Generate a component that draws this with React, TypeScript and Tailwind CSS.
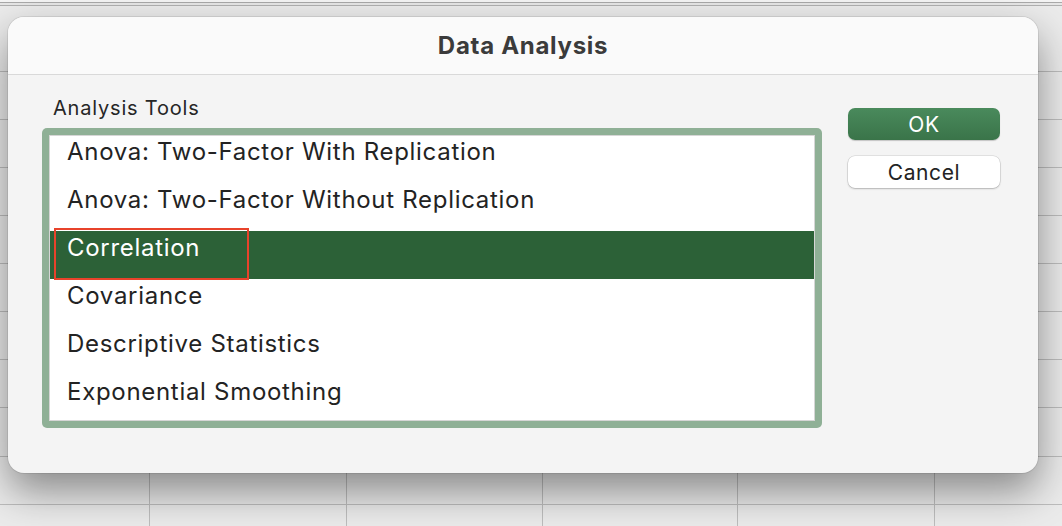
import React from "react";

const tools = [
  "Anova: Two-Factor With Replication",
  "Anova: Two-Factor Without Replication",
  "Correlation",
  "Covariance",
  "Descriptive Statistics",
  "Exponential Smoothing",
];

const colWidths = ["w-[150px]", "w-[197px]", "w-[196px]", "w-[195px]", "w-[197px]", "flex-1"];

function SheetRow({ h, noCols }: { h: string; noCols?: boolean }) {
  return (
    <div className={`flex ${h} border-b border-[#bdbdbd]`}>
      {colWidths.map((w, i) => (
        <div key={i} className={`${w} ${i < 5 && !noCols ? "border-r border-[#bdbdbd]" : ""}`} />
      ))}
    </div>
  );
}

export default function App() {
  const rowHeights = ["h-[48px]", "h-[48px]", "h-[48px]", "h-[48px]", "h-[48px]", "h-[48px]", "h-[48px]", "h-[49px]", "h-[48px]", "h-[48px]"];

  return (
    <div
      className="relative w-[1062px] h-[526px] overflow-hidden bg-[#ebebeb]"
      style={{ fontFamily: "Inter, 'Noto Sans', sans-serif" }}
    >
      {/* spreadsheet behind */}
      <div className="flex flex-col">
        <div className="h-[2px] bg-[#f4f4f4]" />
        <div className="h-[1px] bg-[#a9a9a9]" />
        <div className="h-[2px] bg-[#e6e6e6]" />
        <div className="h-[1px] bg-[#b0b0b0]" />
        <SheetRow h="h-[66px]" noCols />
        {rowHeights.map((h, i) => (
          <SheetRow key={i} h={h} />
        ))}
      </div>

      {/* dialog */}
      <div className="absolute left-[8px] top-[17px] w-[1030px] h-[456px] rounded-[16px] bg-[#f4f4f4] shadow-[0_18px_40px_rgba(0,0,0,0.42),0_0_0_1px_rgba(0,0,0,0.08)] overflow-hidden">
        <div className="h-[58px] flex items-center justify-center bg-[#fafafa] border-b border-[#d9d9d9]">
          <span className="text-[24px] font-bold text-[#3b3b3b] tracking-[0.7px]">Data Analysis</span>
        </div>

        <div className="flex">
          <div className="pl-[34px]">
            <div className="pl-[11px] pt-[20px] h-[53px] text-[20px] leading-[26px] tracking-[0.8px] text-[#262626]">Analysis Tools</div>
            <div className="w-[780px] h-[300px] rounded-[5px] bg-[#8fb096] p-[7px]">
              <div className="relative h-full bg-white border border-[#d6d6d6] overflow-hidden">
                <div className="flex flex-col -mt-[1px]">
                  {tools.map((t) => {
                    const sel = t === "Correlation";
                    return (
                      <div
                        key={t}
                        className={`h-[48px] pl-[17px] text-[24px] leading-[34px] tracking-[0.7px] ${
                          sel ? "bg-[#2c6137] text-white" : "text-[#232323]"
                        }`}
                      >
                        {t}
                      </div>
                    );
                  })}
                </div>
                <div className="absolute left-[4px] top-[92px] w-[195px] h-[52px] border-2 border-[#e8432b]" />
              </div>
            </div>
          </div>

          <div className="ml-[26px] pt-[33px] flex flex-col gap-[16px]">
            <button className="w-[152px] h-[32px] rounded-[7px] bg-[linear-gradient(#4a8a5c,#3a7449)] text-white text-[21px] leading-none tracking-[0.6px] shadow-[0_1px_1px_rgba(0,0,0,0.2)]">
              OK
            </button>
            <button className="w-[152px] h-[32px] rounded-[7px] bg-white text-[#232323] text-[21px] leading-none tracking-[0.6px] shadow-[0_0_0_0.5px_rgba(0,0,0,0.15),0_1px_2px_rgba(0,0,0,0.2)]">
              Cancel
            </button>
          </div>
        </div>
      </div>
    </div>
  );
}
